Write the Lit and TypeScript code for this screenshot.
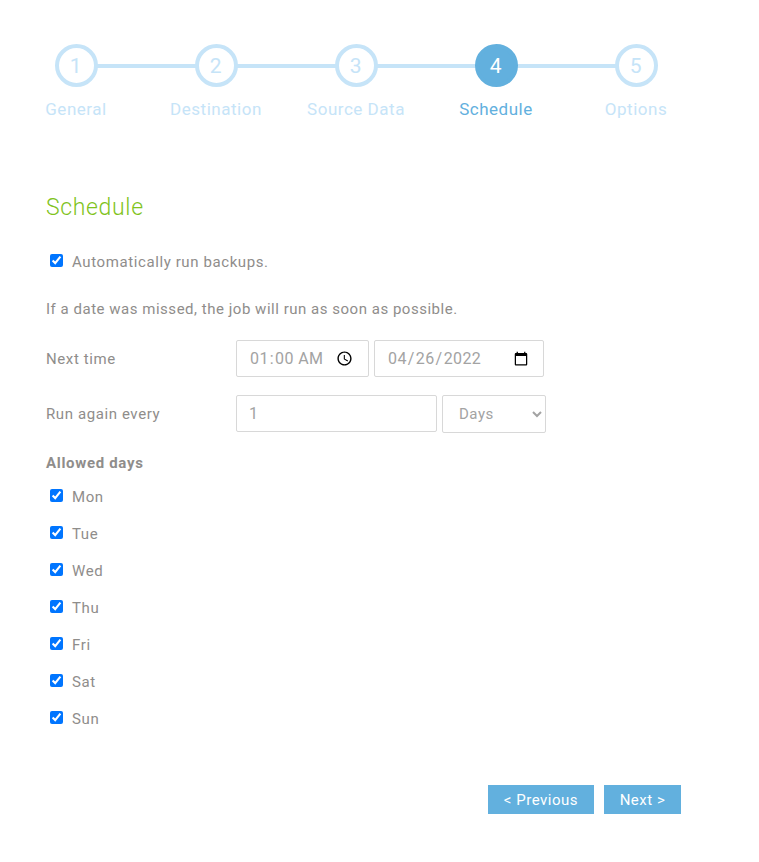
import { LitElement, html, css } from "lit";
import { customElement } from "lit/decorators.js";

const STEPS = ["General", "Destination", "Source Data", "Schedule", "Options"];
const DAYS = ["Mon", "Tue", "Wed", "Thu", "Fri", "Sat", "Sun"];

@customElement("app-root")
export class AppRoot extends LitElement {
  static styles = css`
    :host {
      display: block;
      width: 759px;
      height: 862px;
      background: #fff;
      font-family: "Roboto", "Liberation Sans", sans-serif;
      font-size: 15px;
      color: #8f8d8b;
      letter-spacing: 0.52px;
      box-sizing: border-box;
    }
    .stepper {
      display: flex;
      padding: 44px 0 0 6px;
    }
    .step {
      position: relative;
      width: 140px;
      display: flex;
      flex-direction: column;
      align-items: center;
      color: #c6e4f8;
    }
    .step:not(:last-child)::after {
      content: "";
      position: absolute;
      left: 70px;
      width: 140px;
      top: 20px;
      height: 4px;
      background: #c6e4f8;
    }
    .circle {
      position: relative;
      z-index: 1;
      width: 43px;
      height: 43px;
      box-sizing: border-box;
      border: 4px solid #c6e4f8;
      border-radius: 50%;
      background: #fff;
      display: flex;
      align-items: center;
      justify-content: center;
      font-size: 21px;
    }
    .step-label {
      margin-top: 12px;
      font-size: 17px;
      line-height: 21px;
      white-space: nowrap;
    }
    .step.active { color: #62b0de; }
    .step.active .circle {
      background: #62b0de;
      border-color: #62b0de;
      color: #fff;
    }
    .form {
      padding: 73px 0 0 46px;
    }
    h2 {
      margin: 0;
      font-size: 23px;
      font-weight: 300;
      letter-spacing: 0.65px;
      line-height: 30px;
      color: #7fc31c;
    }
    .check {
      display: flex;
      align-items: center;
      height: 20px;
    }
    .check input {
      margin: 0 9px 4px 4px;
      width: 13px;
      height: 13px;
    }
    .check span { letter-spacing: 0.6px; }
    .auto { margin-top: 29px; }
    .note { margin: 27px 0 0; line-height: 20px; }
    .row {
      display: flex;
      align-items: flex-start;
    }
    .row label { width: 190px; align-self: center; letter-spacing: 0.6px; }
    .row.first { margin-top: 21px; }
    .row.second { margin-top: 18px; }
    .field {
      box-sizing: border-box;
      height: 37px;
      border: 1px solid #d8d8d8;
      border-radius: 2px;
      background: #fff;
      font: inherit;
      font-size: 16px;
      letter-spacing: 0.4px;
      color: #a3a3a3;
      padding: 0 12px;
      margin: 0;
      outline: none;
    }
    .time { width: 133px; margin-right: 5px; }
    .date { width: 170px; }
    .num { width: 201px; margin-right: 5px; }
    .sel { width: 104px; height: 38px; padding: 0 8px 0 12px; font-size: 15px; letter-spacing: 0.52px; }
    .days-title {
      margin-top: 20px;
      font-weight: 700;
      font-size: 15px;
      letter-spacing: 0.68px;
      line-height: 20px;
    }
    .days {
      margin-top: 14px;
      display: flex;
      flex-direction: column;
      gap: 17px;
    }
    .actions {
      display: flex;
      gap: 10px;
      margin: 56px 0 0 442px;
    }
    button {
      height: 29px;
      border: none;
      background: #62b0de;
      color: #fff;
      font: inherit;
      letter-spacing: inherit;
      padding: 0;
    }
    .prev { width: 106px; }
    .next { width: 77px; }
  `;

  render() {
    return html`
      <div class="stepper">
        ${STEPS.map(
          (s, i) => html`
            <div class="step ${i === 3 ? "active" : ""}">
              <div class="circle">${i + 1}</div>
              <div class="step-label">${s}</div>
            </div>
          `
        )}
      </div>
      <div class="form">
        <h2>Schedule</h2>
        <div class="check auto"><input type="checkbox" checked /><span>Automatically run backups.</span></div>
        <p class="note">If a date was missed, the job will run as soon as possible.</p>
        <div class="row first">
          <label>Next time</label>
          <input class="field time" type="time" value="01:00" />
          <input class="field date" type="date" value="2022-04-26" />
        </div>
        <div class="row second">
          <label>Run again every</label>
          <input class="field num" type="text" value="1" />
          <select class="field sel"><option>Days</option></select>
        </div>
        <div class="days-title">Allowed days</div>
        <div class="days">
          ${DAYS.map(
            (d) => html`<div class="check"><input type="checkbox" checked /><span>${d}</span></div>`
          )}
        </div>
        <div class="actions">
          <button class="prev">&lt; Previous</button>
          <button class="next">Next &gt;</button>
        </div>
      </div>
    `;
  }
}
